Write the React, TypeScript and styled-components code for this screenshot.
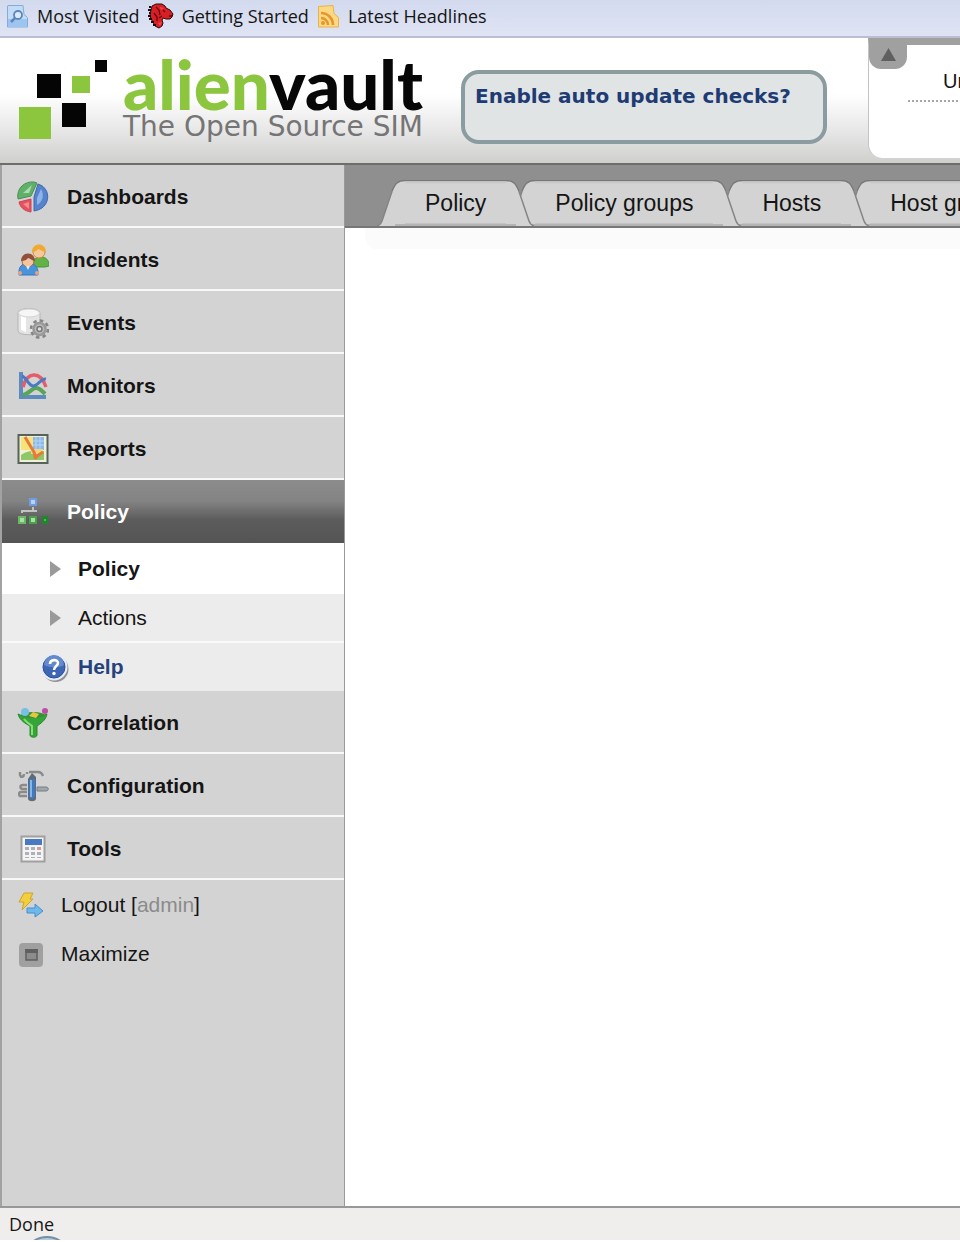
import React from "react";
import styled, { createGlobalStyle } from "styled-components";

const GlobalStyle = createGlobalStyle`
  *, *::before, *::after { box-sizing: border-box; }
  body { margin: 0; background: #fff; overflow-x: hidden; }
  a { color: inherit; text-decoration: none; }
  ul { list-style: none; margin: 0; padding: 0; }
  svg { display: block; flex: none; }
  button { font: inherit; border: 0; margin: 0; padding: 0; cursor: pointer; }
`;

const Page = styled.div`
  display: flex;
  flex-direction: column;
  min-height: 100vh;
  overflow: hidden;
  font-family: "Liberation Sans", Arial, sans-serif;
  color: #151515;
`;

const BookmarksBar = styled.nav`
  display: flex;
  align-items: center;
  gap: 8px;
  height: 38px;
  padding: 0 6px 4px;
  background: linear-gradient(#d3daee, #dfe4f4);
  border-bottom: 2px solid #b9bfd0;
  font-family: "Open Sans", "Noto Sans", sans-serif;
  font-size: 18px;
`;

const Bookmark = styled.a`
  display: flex;
  align-items: center;
  gap: 8px;
  line-height: 24px;
  white-space: nowrap;
`;

const Header = styled.header`
  display: flex;
  height: 127px;
  background: linear-gradient(#fff 45%, #e9e9e9 72%, #cfcfce);
  border-bottom: 2px solid #6d6d6d;
`;

const Brand = styled.a`
  display: flex;
  gap: 16px;
  flex: none;
  width: 461px;
  padding: 20px 0 0 18px;
`;

const Wordmark = styled.div`
  display: flex;
  flex-direction: column;
  white-space: nowrap;
`;

const BrandName = styled.span`
  font: 900 69px/52px Lato, sans-serif;
  color: #070707;
`;

const BrandAccent = styled.span`
  color: #8cc63f;
`;

const Tagline = styled.span`
  padding-top: 2px;
  font: 28px/30px "DejaVu Sans", sans-serif;
  color: #757575;
`;

const UpdateNotice = styled.div`
  flex: none;
  width: 366px;
  height: 74px;
  margin-top: 32px;
  padding: 10px 10px;
  background: #e0e4e4;
  border: 4px solid #8a9c9f;
  border-radius: 18px;
  color: #1f3b73;
  font: bold 20px/24px "DejaVu Sans", sans-serif;
  white-space: nowrap;
`;

const StatusPanel = styled.section`
  flex: 1;
  height: 120px;
  margin-left: 41px;
  background: #fff;
  border-left: 1px solid #c4c4c4;
  border-top: 7px solid #a0a0a0;
  border-bottom-left-radius: 14px;
  min-width: 0;
`;

const CollapseButton = styled.button`
  display: flex;
  justify-content: center;
  width: 38px;
  height: 24px;
  padding-top: 3px;
  background: #a0a0a0;
  border-radius: 0 0 12px 12px;
`;

const StatusLine = styled.div`
  margin-left: 39px;
  padding: 0 35px 7px;
  border-bottom: 2px dotted #a8a8a8;
  font-size: 20px;
  line-height: 24px;
  white-space: nowrap;
`;

const Body = styled.div`
  display: flex;
  flex: 1;
`;

const Sidebar = styled.nav`
  flex: none;
  width: 345px;
  background: #d3d3d3;
  border-left: 2px solid #a2a2a2;
  border-right: 1px solid #999;
  font-size: 21px;
`;

const MenuLink = styled.a<{ $active?: boolean }>`
  display: flex;
  align-items: center;
  gap: 18px;
  height: 63px;
  padding: 3px 15px 0;
  border-bottom: 2px solid ${(p) => (p.$active ? "#555" : "#f8f8f8")};
  background: ${(p) => (p.$active ? "linear-gradient(#8c8c8c, #838383 35%, #5c5c5c 65%, #555)" : "none")};
  color: ${(p) => (p.$active ? "#fff" : "#151515")};
  font-weight: bold;
`;

const SubLink = styled.a<{ $kind: "current" | "plain" | "help" }>`
  display: flex;
  align-items: center;
  gap: 9px;
  height: ${(p) => (p.$kind === "current" ? 51 : p.$kind === "plain" ? 49 : 48)}px;
  padding-left: 38px;
  background: ${(p) => (p.$kind === "current" ? "#fff" : "#ececec")};
  border-bottom: ${(p) => (p.$kind === "plain" ? "2px solid #f9f9f9" : "0")};
  color: ${(p) => (p.$kind === "help" ? "#26427d" : "#151515")};
  font-weight: ${(p) => (p.$kind === "plain" ? "normal" : "bold")};
`;

const SessionLink = styled.a`
  display: flex;
  align-items: center;
  gap: 17px;
  height: 49px;
  padding-left: 16px;
`;

const UserName = styled.span`
  color: #8b8b8b;
`;

const Content = styled.main`
  flex: 1;
  min-width: 0;
  background: #fff;
`;

const TabBar = styled.nav`
  display: flex;
  align-items: flex-end;
  height: 63px;
  padding-left: 32px;
  background: #8f8f8f;
  border-bottom: 2px solid #777;
`;

const TabLink = styled.a<{ $level: number }>`
  position: relative;
  z-index: ${(p) => p.$level};
  display: flex;
  flex: none;
  height: 46px;
  font-size: 23px;
  line-height: 46px;
  white-space: nowrap;

  & + & { margin-left: -27px; }
`;

const TabLabel = styled.span`
  padding: 0 20px;
  background: linear-gradient(#777 1px, #bdbdbd 1px, #d3d3d3 4px, #d3d3d3 43px, #b4b4b4 44px, #b4b4b4);
`;

const ContentTop = styled.div`
  height: 21px;
  margin-left: 20px;
  background: #fbfbfb;
  border-bottom-left-radius: 12px;
`;

const StatusBar = styled.footer`
  position: relative;
  height: 36px;
  padding: 1px 9px 0;
  background: #f0eded;
  border-top: 2px solid #989898;
  border-bottom: 2px solid #fff;
  overflow: hidden;
  font: 18px/30px "Open Sans", "Noto Sans", sans-serif;
`;

const StartOrb = styled.div`
  position: absolute;
  left: 22px;
  top: 28px;
  width: 50px;
  height: 50px;
  border: 2px solid #7590a5;
  border-radius: 50%;
  background: #b5cbdc;
`;

const Icon = ({ size = 32, box = 32, children }: { size?: number; box?: number; children: React.ReactNode }) => (
  <svg width={size} height={size} viewBox={`0 0 ${box} ${box}`} aria-hidden="true">
    {children}
  </svg>
);

const MostVisitedIcon = () => (
  <Icon size={23} box={23}>
    <path d="M2 .5h15l1 9 3.500 3V22H1.500V1z" fill="#c3dcf5" stroke="#83add9" />
    <path d="M2 14h19v7.500H2z" fill="#9dc5ef" />
    <circle cx="12" cy="10" r="4" fill="#d9ebfb" stroke="#5f84be" strokeWidth="1.800" />
    <path d="M9 13l-4 4" stroke="#5f84be" strokeWidth="2.500" />
  </Icon>
);

const DragonIcon = () => (
  <Icon size={26} box={26}>
    <path d="M4 3l4-2h6l3 2 1 2 4 2 3 4-1 3-2 2h-4l-3-1-1 2 1 3-1 3-3 2-4-2-2-4-2-3-1-4 1-5z" fill="#d71f25" stroke="#2a0a0c" strokeWidth="1" />
    <path d="M1 4h2M0 7h3M1 10h2M0 13h3M1 16h3M3 19h3M5 22h3" stroke="#111" strokeWidth="1.800" />
    <path d="M8 4l3 3 1 5M15 7l2 2M6 10l3 4v4M11 15l3-2M21 13h3" stroke="#64090d" strokeWidth="1.300" fill="none" />
    <path d="M12 4l4 1-3 2zM10 20l2 3 2-4z" fill="#f04a4a" />
  </Icon>
);

const FeedIcon = () => (
  <Icon size={23} box={23}>
    <path d="M1.500 1.500L16 .5l1 8 4.500 4V22h-20z" fill="#fbd983" stroke="#e6b348" />
    <circle cx="6" cy="18" r="2" fill="#e8942f" />
    <path d="M4 13a7 7 0 0 1 7 7M4 8a12 12 0 0 1 12 12" fill="none" stroke="#e8942f" strokeWidth="2.600" />
  </Icon>
);

const LogoMark = () => (
  <svg width="89" height="82" viewBox="0 0 89 82" aria-hidden="true">
    <path d="M19 16h24v24H19zM44 45h24v24H44zM77 2h12v12H77z" fill="#050505" />
    <path d="M1 49h32v32H1zM54 18h18v17H54z" fill="#8cc63f" />
  </svg>
);

const PieIcon = () => (
  <Icon>
    <path d="M14 15L1 18C-1 7 8 0 17 1l3 1z" fill="#61b06a" stroke="#489052" />
    <path d="M6 12l9-8-3 8z" fill="#a9dcae" />
    <path d="M17 16l4-13c9 3 11 11 9 17-2 6-7 9-13 10z" fill="#5583cd" stroke="#3f69b0" />
    <path d="M20 17l4-9c4 7 1 13-4 16z" fill="#8fb3e6" />
    <path d="M14 18v13C7 30 3 26 2 21z" fill="#e5515c" stroke="#cf4450" />
    <path d="M12 21v7l-6-5z" fill="#f08b92" />
  </Icon>
);

const PeopleIcon = () => (
  <Icon>
    <path d="M16 22c0-7 3-9 8-9s8 3 8 9l-4 1H18z" fill="#62b246" stroke="#4b9637" />
    <circle cx="22" cy="8" r="6" fill="#f5c9a0" stroke="#d08b35" />
    <path d="M15 8c0-10 14-10 14 0-4 0-6-3-8-3-1 2-3 3-6 3z" fill="#f0aa2f" />
    <path d="M2 31c-1-8 3-12 9-12s11 4 10 12z" fill="#4793dc" stroke="#3579c0" />
    <circle cx="11" cy="17" r="6" fill="#f3c4a0" stroke="#a4674a" />
    <path d="M4 17c0-10 14-10 14 0-3 0-5-3-7-3-1 2-4 3-7 3z" fill="#905039" />
    <path d="M9 22l2 4 2-4z" fill="#d9efff" />
    <circle cx="3" cy="29" r="2" fill="#e9a27c" />
    <circle cx="20" cy="29" r="2" fill="#e9a27c" />
  </Icon>
);

const DatabaseGearIcon = () => (
  <Icon>
    <path d="M1 6c0-6 22-6 22 0v18c0 5-22 5-22 0z" fill="#e4e4e4" stroke="#b5b5b5" />
    <path d="M4 8h5v17l-5-2z" fill="#fff" />
    <ellipse cx="12" cy="6" rx="10.500" ry="4" fill="#f6f6f6" stroke="#d2d2d2" />
    <circle cx="22.500" cy="22" r="8.500" fill="none" stroke="#858585" strokeWidth="2.600" strokeDasharray="3.500 3.170" />
    <circle cx="22.500" cy="22" r="6" fill="#bcbcbc" stroke="#999" strokeWidth="2.500" />
    <circle cx="22.500" cy="22" r="2.500" fill="#ddd" stroke="#777" strokeWidth="1.500" />
  </Icon>
);

const ChartIcon = () => (
  <Icon>
    <path d="M4 2v25h25" fill="none" stroke="#5c8cbd" strokeWidth="4" />
    <path d="M6 25c6-1 9-7 13-7 4 0 6 3 9 6" fill="none" stroke="#58a557" strokeWidth="4" />
    <path d="M6 17C10 2 23 0 29 17" fill="none" stroke="#e65c6b" strokeWidth="3.500" />
    <path d="M5 6c4 1 7 10 11 10 5 0 8-8 13-7" fill="none" stroke="#4a7bc2" strokeWidth="3" />
  </Icon>
);

const ReportIcon = () => (
  <Icon>
    <path d="M1.500 2h29v28h-29z" fill="#f0efda" stroke="#566457" strokeWidth="2" />
    <path d="M4 4h12v13H4z" fill="#f6e379" />
    <path d="M16 4h11v13H16z" fill="#8db9ea" />
    <path d="M4 22c6-5 13-4 23-4v9H4z" fill="#8ec668" />
    <path d="M14 16h12v5H14z" fill="#f4d774" />
    <path d="M19 4v13M23 4v13M16 8h11M16 12h11" stroke="#b6d4f3" />
    <path d="M8 4l9 15 2 7M17 25l9-6" fill="none" stroke="#e9783b" strokeWidth="3" />
  </Icon>
);

const NetworkIcon = () => (
  <Icon>
    <path d="M5 17v-2h11v-4M16 15h4" fill="none" stroke="#c2c2c2" strokeWidth="2" />
    <path d="M12 2h8v8h-8z" fill="#6f9de0" />
    <path d="M14 4h4v4h-4z" fill="#b6d2f8" />
    <path d="M1 20h8v8H1z" fill="#69b866" />
    <path d="M12 20h8v8h-8z" fill="#46a349" />
    <path d="M25 20h6v8h-6z" fill="#21862b" />
    <path d="M3 22h4v4H3zM14 22h4v4h-4z" fill="#a9dfa4" />
    <path d="M27 23h2v2h-2z" fill="#56b858" />
  </Icon>
);

const FunnelIcon = () => (
  <Icon>
    <path d="M1 7c7 4 22 4 29 0-1 5-4 8-10 12v9c0 3-7 3-7 0v-9C5 15 2 11 1 7z" fill="#35a537" stroke="#278a2b" />
    <path d="M7 12c3 4 7 6 8 7v9" fill="none" stroke="#8adb7b" strokeWidth="2" />
    <ellipse cx="16" cy="8" rx="12" ry="3" fill="#38903a" />
    <circle cx="8" cy="5" r="4" fill="#76bfe5" />
    <path d="M12 9l4-4 6 2-3 4z" fill="#e2c93c" />
    <circle cx="28" cy="4" r="3" fill="#bd4ca4" />
  </Icon>
);

const ToolsIcon = () => (
  <Icon>
    <path d="M3 2v3c1 3 4 2 4-1M10 4V2M12 2h9c3 0 4 1 5 4M10 15H6c-4 0-3 4 0 4h4M10 22H4c-3 0-2 5 0 4h6" fill="none" stroke="#8a8a8a" strokeWidth="2.400" />
    <path d="M20 17h9c3 0 3 4 0 4h-9z" fill="#a0a7ac" stroke="#777e84" />
    <path d="M11 9l4-6 4 4v22c-1 3-7 3-8 0z" fill="#5f6b76" />
    <path d="M12 9h6v18c-1 2-5 2-6 0z" fill="#3e7abf" />
    <path d="M14 10v17" stroke="#87b5e6" strokeWidth="2" />
  </Icon>
);

const TableIcon = () => (
  <Icon>
    <path d="M4.500 3.500h23v25h-23z" fill="#f4f4f4" stroke="#a0a0a0" strokeWidth="2" />
    <path d="M8 6h17v6H8z" fill="#4b78c2" />
    <path d="M8 14h4v3H8zM14 14h4v3h-4zM8 19h4v3H8zM14 19h4v3h-4zM20 19h4v3h-4zM8 24h4v1H8zM14 24h4v1h-4zM20 24h4v1h-4z" fill="#aeb2b8" />
    <path d="M20 14h4v3h-4z" fill="#d99a93" />
  </Icon>
);

const LogoutIcon = () => (
  <Icon size={26} box={26}>
    <path d="M6 1h9l-3 6h3L4 18l2-8H1z" fill="#f3cf3c" stroke="#cfa22c" />
    <path d="M9 16h8v-4l8 7-8 6v-4H9z" fill="#6fb8ec" stroke="#4391cd" />
  </Icon>
);

const MaximizeIcon = () => (
  <Icon size={26} box={26}>
    <rect x="1" y="2" width="24" height="24" rx="4" fill="#a0a0a0" />
    <rect x="8" y="9" width="11" height="10" fill="#8c8c8c" stroke="#5f5f5f" strokeWidth="1.500" />
    <path d="M7 8h13v4H7z" fill="#606060" />
  </Icon>
);

const ArrowIcon = () => (
  <svg width="29" height="18" viewBox="0 0 29 18" aria-hidden="true">
    <path d="M10 1l11 8-11 8z" fill="#9a9a9a" />
  </svg>
);

const HelpIcon = () => (
  <Icon size={29} box={29}>
    <circle cx="15.500" cy="16" r="13" fill="#8f8f94" />
    <circle cx="14" cy="14" r="13.500" fill="#e6ebf5" />
    <circle cx="14" cy="14" r="11" fill="#3f66b4" stroke="#2d4f98" />
    <path d="M4 12a10 10 0 0 1 20 0c-5 3-14 3-20 0z" fill="#6489cc" />
    <path d="M10 11c0-5 8-5 8-1 0 3-4 3-4 7" fill="none" stroke="#fff" strokeWidth="2.600" />
    <circle cx="14" cy="20.500" r="1.700" fill="#fff" />
  </Icon>
);

const TabEdge = ({ side }: { side: "left" | "right" }) => (
  <svg width="28" height="46" viewBox="0 0 28 46" aria-hidden="true">
    <g transform={side === "right" ? "translate(28 0) scale(-1 1)" : undefined}>
      <path d="M28 .5c-7 0-10 3-13 11L5 41c-1 3-2 4-5 5h28z" fill="#d3d3d3" />
      <path d="M18 44h10v2H18z" fill="#b4b4b4" />
      <path d="M28 .5c-7 0-10 3-13 11" fill="none" stroke="#777" strokeWidth="1.300" />
      <path d="M15 11.500L5 41c-1 3-2 4-5 5" fill="none" stroke="#858585" strokeWidth="1.500" />
    </g>
  </svg>
);

const mainMenu = [
  { label: "Dashboards", icon: PieIcon },
  { label: "Incidents", icon: PeopleIcon },
  { label: "Events", icon: DatabaseGearIcon },
  { label: "Monitors", icon: ChartIcon },
  { label: "Reports", icon: ReportIcon },
  { label: "Policy", icon: NetworkIcon, active: true },
  { label: "Correlation", icon: FunnelIcon },
  { label: "Configuration", icon: ToolsIcon },
  { label: "Tools", icon: TableIcon },
];

const tabs = ["Policy", "Policy groups", "Hosts", "Host groups"];

const PolicySubmenu = () => (
  <ul>
    <li><SubLink href="#policy" $kind="current"><ArrowIcon />Policy</SubLink></li>
    <li><SubLink href="#actions" $kind="plain"><ArrowIcon />Actions</SubLink></li>
    <li><SubLink href="#help" $kind="help"><HelpIcon />Help</SubLink></li>
  </ul>
);

export default function App() {
  return (
    <Page>
      <GlobalStyle />
      <BookmarksBar aria-label="Bookmarks">
        <Bookmark href="#visited"><MostVisitedIcon />Most Visited</Bookmark>
        <Bookmark href="#started"><DragonIcon />Getting Started</Bookmark>
        <Bookmark href="#headlines"><FeedIcon />Latest Headlines</Bookmark>
      </BookmarksBar>
      <Header>
        <Brand href="#home">
          <LogoMark />
          <Wordmark>
            <BrandName><BrandAccent>alien</BrandAccent>vault</BrandName>
            <Tagline>The Open Source SIM</Tagline>
          </Wordmark>
        </Brand>
        <UpdateNotice><a href="#updates">Enable auto update checks?</a></UpdateNotice>
        <StatusPanel>
          <CollapseButton aria-label="Collapse">
            <svg width="15" height="13" viewBox="0 0 15 13" aria-hidden="true">
              <path d="M7.500 0L15 13H0z" fill="#606060" />
            </svg>
          </CollapseButton>
          <StatusLine>Unresolved</StatusLine>
        </StatusPanel>
      </Header>
      <Body>
        <Sidebar aria-label="Main menu">
          <ul>
            {mainMenu.map(({ label, icon: MenuIcon, active }) => (
              <li key={label}>
                <MenuLink href={`#${label}`} $active={active}><MenuIcon />{label}</MenuLink>
                {active && <PolicySubmenu />}
              </li>
            ))}
          </ul>
          <SessionLink href="#logout">
            <LogoutIcon />
            <span>Logout [<UserName>admin</UserName>]</span>
          </SessionLink>
          <SessionLink href="#maximize"><MaximizeIcon />Maximize</SessionLink>
        </Sidebar>
        <Content>
          <TabBar aria-label="Sections">
            {tabs.map((tab, i) => (
              <TabLink key={tab} href={`#${tab}`} $level={tabs.length - i}>
                <TabEdge side="left" />
                <TabLabel>{tab}</TabLabel>
                <TabEdge side="right" />
              </TabLink>
            ))}
          </TabBar>
          <ContentTop />
        </Content>
      </Body>
      <StatusBar>
        Done
        <StartOrb />
      </StatusBar>
    </Page>
  );
}
